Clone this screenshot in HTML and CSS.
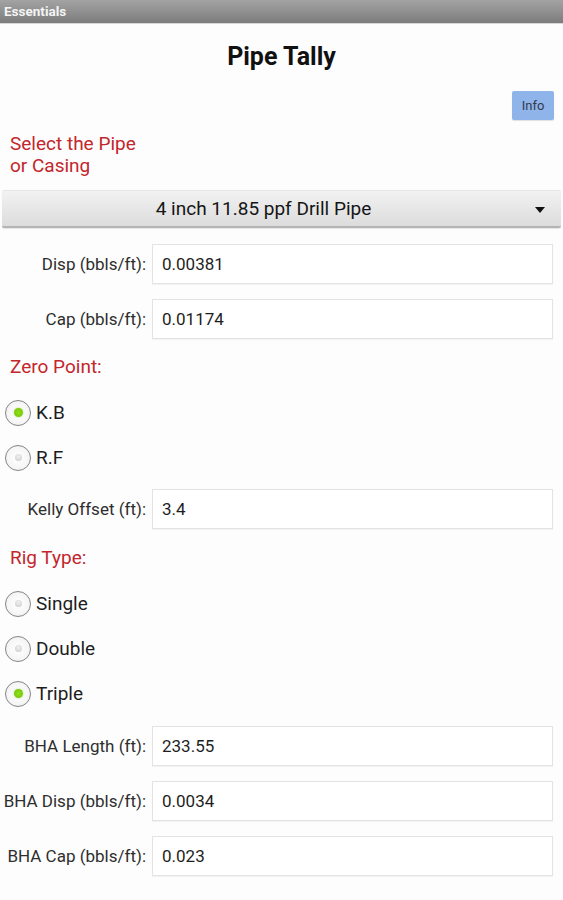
FILE: index.html
```html
<!DOCTYPE html>
<html>
<head>
<meta charset="utf-8">
<link rel="stylesheet" href="styles.css">
</head>
<body>
<div class="titlebar">Essentials</div>
<div class="page">
  <h1 class="title">Pipe Tally</h1>
  <div class="info-row"><div class="info-btn">Info</div></div>
  <div class="heading heading-select">Select the Pipe<br>or Casing</div>
  <div class="dropdown">
    <span class="dropdown-text">4 inch 11.85 ppf Drill Pipe</span>
    <span class="caret"></span>
  </div>
  <div class="field first">
    <div class="label">Disp (bbls/ft):</div>
    <div class="input">0.00381</div>
  </div>
  <div class="field">
    <div class="label">Cap (bbls/ft):</div>
    <div class="input">0.01174</div>
  </div>
  <div class="heading section">Zero Point:</div>
  <div class="radios">
    <div class="radio-row"><span class="radio checked"></span><span class="radio-label">K.B</span></div>
    <div class="radio-row"><span class="radio"></span><span class="radio-label">R.F</span></div>
  </div>
  <div class="field kelly">
    <div class="label">Kelly Offset (ft):</div>
    <div class="input">3.4</div>
  </div>
  <div class="heading section rig">Rig Type:</div>
  <div class="radios">
    <div class="radio-row"><span class="radio"></span><span class="radio-label">Single</span></div>
    <div class="radio-row"><span class="radio"></span><span class="radio-label">Double</span></div>
    <div class="radio-row"><span class="radio checked"></span><span class="radio-label">Triple</span></div>
  </div>
  <div class="field bha">
    <div class="label">BHA Length (ft):</div>
    <div class="input">233.55</div>
  </div>
  <div class="field">
    <div class="label">BHA Disp (bbls/ft):</div>
    <div class="input">0.0034</div>
  </div>
  <div class="field">
    <div class="label">BHA Cap (bbls/ft):</div>
    <div class="input">0.023</div>
  </div>
</div>
</body>
</html>
```

FILE: styles.css
```css
html, body {
  margin: 0;
  padding: 0;
  background: #fdfdfd;
  font-family: Roboto, "Noto Sans", "Liberation Sans", sans-serif;
  width: 563px;
  height: 900px;
  overflow: hidden;
}

.titlebar {
  height: 23px;
  line-height: 23px;
  padding-left: 4px;
  background: linear-gradient(#a3a3a3, #7c7c7c);
  color: #f4f4f4;
  font-size: 13.5px;
  font-weight: bold;
  border-bottom: 1px solid #d6d6d6;
}

.page {
  display: flex;
  flex-direction: column;
}

.title {
  margin: 19px 0 0 0;
  text-align: center;
  font-size: 25px;
  line-height: 28px;
  font-weight: bold;
  color: #111;
}

.info-row {
  display: flex;
  justify-content: flex-end;
  margin-top: 20px;
  padding-right: 9px;
}

.info-btn {
  width: 42px;
  height: 29px;
  line-height: 29px;
  text-align: center;
  font-size: 13px;
  color: #333a4a;
  background: #8fb4ea;
  border-radius: 2px;
  box-shadow: 0 1px 1px rgba(0,0,0,0.12);
}

.heading {
  color: #c3262c;
  font-size: 19px;
  line-height: 22px;
  padding-left: 10px;
}

.heading-select {
  margin-top: 13px;
}

.dropdown {
  margin: 13px 2px 0 2px;
  height: 35px;
  padding-right: 36px;
  display: flex;
  align-items: center;
  justify-content: center;
  position: relative;
  background: linear-gradient(#f2f2f2, #dcdcdc);
  border-top: 1px solid #e6e6e6;
  border-bottom: 2px solid #b4b4b4;
  box-shadow: 0 1px 1px rgba(0,0,0,0.1);
  border-radius: 2px;
}

.dropdown-text {
  font-size: 19px;
  color: #151515;
}

.caret {
  position: absolute;
  right: 16px;
  top: 16px;
  width: 0;
  height: 0;
  border-left: 5px solid transparent;
  border-right: 5px solid transparent;
  border-top: 6px solid #111;
}

.field {
  display: flex;
  align-items: center;
  gap: 6px;
  margin-top: 15px;
  padding-right: 10px;
}

.field.first { margin-top: 16px; }
.field.kelly { margin-top: 9px; }
.field.bha { margin-top: 10px; }

.label {
  width: 146px;
  flex: none;
  text-align: right;
  font-size: 17px;
  color: #2e2e2e;
  white-space: nowrap;
}

.input {
  flex: 1;
  height: 38px;
  line-height: 38px;
  padding-left: 9px;
  font-size: 17px;
  color: #1e1e1e;
  background: #fff;
  border: 1px solid #e3e3e3;
  box-shadow: 0 1px 1px rgba(0,0,0,0.04);
}

.section {
  margin-top: 17px;
}

.section.rig {
  margin-top: 18px;
}

.radios {
  margin-top: 12px;
  display: flex;
  flex-direction: column;
}

.radio-row {
  height: 45px;
  display: flex;
  align-items: center;
  padding-left: 5px;
}

.radio {
  box-sizing: border-box;
  width: 26px;
  height: 26px;
  border-radius: 50%;
  border: 1.5px solid #858585;
  background: radial-gradient(circle, #ffffff 0%, #f6f6f6 60%, #e8e8e8 100%);
  display: flex;
  align-items: center;
  justify-content: center;
  flex: none;
}

.radio::after {
  content: "";
  width: 7px;
  height: 7px;
  border-radius: 50%;
  background: radial-gradient(circle at 50% 35%, #f0f0f0, #c9c9c9);
}

.radio.checked::after {
  width: 9px;
  height: 9px;
  background: radial-gradient(circle, #8fe01a 0%, #78c80a 70%, #a6dc5a 100%);
  box-shadow: 0 0 2px rgba(120,200,10,0.6);
}

.radio-label {
  margin-left: 5px;
  font-size: 19px;
  color: #1d1d1d;
}
```
